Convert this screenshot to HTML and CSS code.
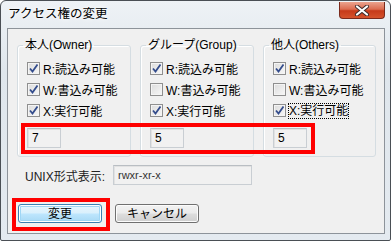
FILE: index.html
```html
<!DOCTYPE html>
<html>
<head>
	<meta charset="utf-8">
	<title>アクセス権の変更</title>
	<link rel="stylesheet" href="styles.css">
</head>
<body>
<div class="window">
	<div class="titlebar">
		<span class="title">アクセス権の変更</span>
		<span class="close">
			<svg width="16" height="11" viewBox="0 0 16 11"><path d="M3 1.5 L13 9.5 M13 1.5 L3 9.5" stroke="#3b2a2a" stroke-width="4" stroke-linecap="round"/><path d="M3 1.5 L13 9.5 M13 1.5 L3 9.5" stroke="#fff" stroke-width="2.2" stroke-linecap="round"/></svg>
		</span>
	</div>
	<div class="client">
		<div class="groups">
			<fieldset class="group">
				<legend>本人(Owner)</legend>
				<div class="inner">
					<div class="row"><span class="cb on"></span>R:読込み可能</div>
					<div class="row"><span class="cb on"></span>W:書込み可能</div>
					<div class="row"><span class="cb on"></span>X:実行可能</div>
					<div class="field num">7</div>
				</div>
			</fieldset>
			<fieldset class="group">
				<legend>グループ(Group)</legend>
				<div class="inner">
					<div class="row"><span class="cb on"></span>R:読込み可能</div>
					<div class="row"><span class="cb"></span>W:書込み可能</div>
					<div class="row"><span class="cb on"></span>X:実行可能</div>
					<div class="field num">5</div>
				</div>
			</fieldset>
			<fieldset class="group">
				<legend>他人(Others)</legend>
				<div class="inner">
					<div class="row"><span class="cb on"></span>R:読込み可能</div>
					<div class="row"><span class="cb"></span>W:書込み可能</div>
					<div class="row"><span class="cb on"></span><span class="focus">X:実行可能</span></div>
					<div class="field num">5</div>
				</div>
			</fieldset>
		</div>
		<div class="unix">
			<span class="unix-label">UNIX形式表示:</span>
			<div class="field wide">rwxr-xr-x</div>
		</div>
		<div class="buttons">
			<button class="btn default">変更</button>
			<button class="btn">キャンセル</button>
		</div>
	</div>
	<div class="mark mark-nums"></div>
	<div class="mark mark-ok"></div>
</div>
</body>
</html>
```
FILE: styles.css
```css
body{
	margin: 0;
	font-family: "Liberation Sans", "Noto Sans CJK JP", sans-serif;
	font-size: 12px;
	color: #000;
}
.window{
	position: relative;
	width: 391px;
	height: 241px;
	box-sizing: border-box;
	border: 1px solid #4a4f55;
	border-radius: 6px 6px 2px 2px;
	background: linear-gradient(#eef2f6, #dfe6ec 30%, #e4eaf0);
}
.titlebar{
	height: 27px;
	display: flex;
	align-items: flex-start;
	padding-left: 7px;
}
.title{
	font-size: 12.5px;
	line-height: 14px;
	margin-top: 6px;
	text-shadow: 0 0 6px #fff, 0 0 3px #fff;
}
.close{
	margin-left: auto;
	margin-right: 5px;
	width: 46px;
	height: 17px;
	margin-top: 1px;
	box-sizing: border-box;
	border: 1px solid #7b2a1c;
	border-top: none;
	border-radius: 0 0 4px 4px;
	background: linear-gradient(#eba38e, #dc6c50 45%, #c63a1a 55%, #d5532c);
	display: flex;
	align-items: center;
	justify-content: center;
}
.close svg{
	display: block;
}
.client{
	margin: 0 5px 0 6px;
	height: 206px;
	box-sizing: border-box;
	border: 1px solid #8d939a;
	background: #f0f0f0;
	padding: 9px 0 0 9px;
}
.groups{
	display: grid;
	grid-template-columns: 114px 114px 113px;
	column-gap: 9px;
}
.group{
	margin: 0;
	padding: 0;
	height: 119px;
	box-sizing: border-box;
	border: 1px solid #d5dde2;
	border-radius: 3px;
	box-shadow: inset 1px 1px 0 #fff;
}
.group legend{
	margin-left: 5px;
	padding: 0 2px;
	line-height: 14px;
}
.inner{
	padding: 6px 0 0 9px;
}
.row{
	height: 21px;
	display: flex;
	align-items: center;
	white-space: nowrap;
}
.cb{
	width: 13px;
	height: 13px;
	box-sizing: border-box;
	border: 1px solid #8f8f8f;
	margin-right: 3px;
	background: linear-gradient(135deg, #dcdcdc, #f7f7f7);
	box-shadow: inset 0 0 0 1px #f4f4f4;
	flex: none;
}
.cb.on{
	background: url("data:image/svg+xml,%3Csvg xmlns='http://www.w3.org/2000/svg' width='11' height='11'%3E%3Cpath d='M2 5.5 L4.5 8.5 L9.5 1.5' fill='none' stroke='%23334c8c' stroke-width='1.8'/%3E%3C/svg%3E") center/11px 11px no-repeat, linear-gradient(135deg, #dcdcdc, #f7f7f7);
}
.focus{
	outline: 1px dotted #000;
	outline-offset: 0;
	line-height: 14px;
}
.field{
	box-sizing: border-box;
	height: 20px;
	border: 1px solid #c9ced3;
	border-top-color: #b9bec3;
	background: #f1f1f1;
	box-shadow: inset 1px 1px 0 #e2e2e2;
	display: flex;
	align-items: center;
	padding-left: 4px;
}
.num{
	width: 34px;
	margin-top: 7px;
}
.unix{
	display: flex;
	align-items: center;
	margin-top: 8px;
	padding-left: 8px;
}
.unix-label{
	width: 88px;
	color: #222;
}
.wide{
	width: 139px;
	font-size: 11px;
	color: #333;
}
.buttons{
	display: flex;
	gap: 13px;
	margin-top: 19px;
	padding-left: 1px;
}
.btn{
	width: 84px;
	height: 19px;
	padding: 0;
	font-family: inherit;
	font-size: 12px;
	line-height: 14px;
	border: 1px solid #707070;
	border-radius: 3px;
	background: linear-gradient(#f2f2f2, #ebebeb 48%, #dddddd 52%, #cfcfcf);
	box-shadow: inset 0 0 0 1px #fcfcfc;
	color: #000;
}
.btn.default{
	border-color: #3c7fb1;
	background: linear-gradient(#eaf6fd, #d9f0fc 48%, #bee6fd 52%, #a7d9f5);
	box-shadow: inset 0 0 0 1px #fff, inset 0 0 0 2px #9fd6f5;
}
.mark{
	position: absolute;
	box-sizing: border-box;
	border: 4px solid #f00;
}
.mark-nums{
	left: 20px;
	top: 122px;
	width: 294px;
	height: 31px;
}
.mark-ok{
	left: 11px;
	top: 197px;
	width: 98px;
	height: 33px;
}
```
